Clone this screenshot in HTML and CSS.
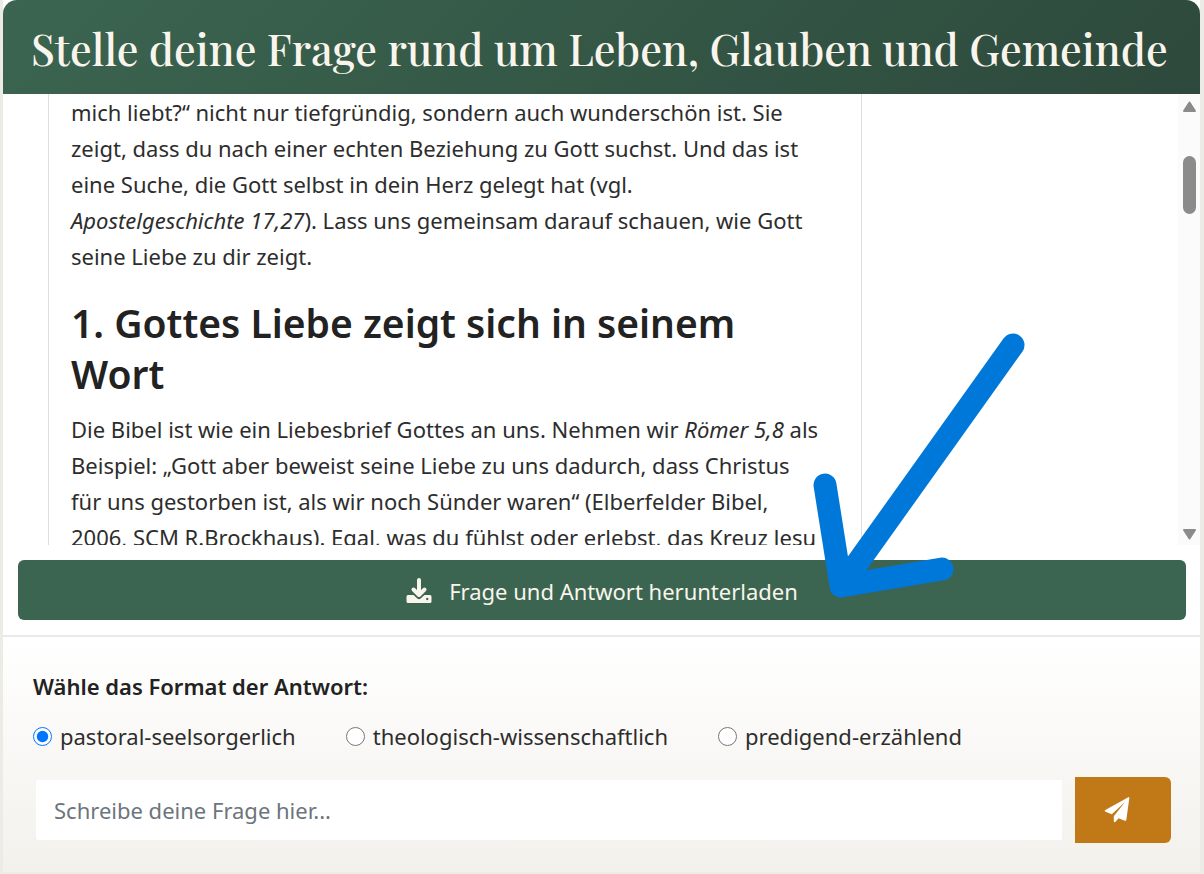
FILE: index.html
```html
<!DOCTYPE html>
<html lang="de">
<head>
<meta charset="utf-8">
<meta name="viewport" content="width=device-width, initial-scale=1">
<title>Stelle deine Frage</title>
<link rel="stylesheet" href="styles.css">
</head>
<body>
<main class="app">
  <header class="app-header">
    <h1 class="app-title">Stelle deine Frage rund um Leben, Glauben und Gemeinde</h1>
  </header>

  <section class="chat">
    <div class="chat-body">
      <article class="message">
        <p class="message-text">mich liebt?“ nicht nur tiefgründig, sondern auch wunderschön ist. Sie<br>
          zeigt, dass du nach einer echten Beziehung zu Gott suchst. Und das ist<br>
          eine Suche, die Gott selbst in dein Herz gelegt hat (vgl.<br>
          <em>Apostelgeschichte 17,27</em>). Lass uns gemeinsam darauf schauen, wie Gott<br>
          seine Liebe zu dir zeigt.</p>
        <h2 class="message-heading">1. Gottes Liebe zeigt sich in seinem<br>Wort</h2>
        <p class="message-text">Die Bibel ist wie ein Liebesbrief Gottes an uns. Nehmen wir <em>Römer 5,8</em> als<br>
          Beispiel: „Gott aber beweist seine Liebe zu uns dadurch, dass Christus<br>
          für uns gestorben ist, als wir noch Sünder waren“ (Elberfelder Bibel,<br>
          2006, SCM R.Brockhaus). Egal, was du fühlst oder erlebst, das Kreuz Jesu</p>
      </article>
    </div>
    <div class="scrollbar" aria-hidden="true">
      <svg class="scroll-arrow" viewBox="0 0 15 12"><path d="M7.500 1.500 13 10H2Z"/></svg>
      <div class="scroll-track"><div class="scroll-thumb"></div></div>
      <svg class="scroll-arrow" viewBox="0 0 15 12"><path d="M2 2H13L7.500 10.500Z"/></svg>
    </div>
  </section>

  <div class="download">
    <button class="download-button" type="button">
      <svg class="download-icon" viewBox="0 0 26 26" aria-hidden="true">
        <path class="icon-line" d="M13 2V16M7.500 11.500 13 17 18.500 11.500"/>
        <path class="icon-fill" fill-rule="evenodd" d="M2 17H7.500L11.300 20.500Q13 22 14.700 20.500L18.500 17H24Q25.500 17 25.500 18.500V23.500Q25.500 25 24 25H2Q.5 25 .5 23.500V18.500Q.5 17 2 17ZM21.200 19.800a1.200 1.200 0 1 0 .1 0Z"/>
      </svg>
      <span>Frage und Antwort herunterladen</span>
    </button>
  </div>

  <form class="ask">
    <fieldset class="formats">
      <legend class="formats-title">Wähle das Format der Antwort:</legend>
      <div class="formats-row">
        <label class="format"><input class="format-radio" type="radio" name="format" checked><span>pastoral-seelsorgerlich</span></label>
        <label class="format"><input class="format-radio" type="radio" name="format"><span>theologisch-wissenschaftlich</span></label>
        <label class="format"><input class="format-radio" type="radio" name="format"><span>predigend-erzählend</span></label>
      </div>
    </fieldset>
    <div class="question">
      <input class="question-input" type="text" aria-label="Deine Frage" placeholder="Schreibe deine Frage hier...">
      <button class="send-button" type="button" aria-label="Senden">
        <svg class="send-icon" viewBox="0 0 26 26" aria-hidden="true">
          <path d="M24.300.2Q25.500-.2 25.300 1.300L22.400 22.600Q22.200 24.200 20.800 23.700L14.500 21.200 11.800 24.600Q10 26.200 9.800 24V19.300L20.800 5.300 7.800 17.200 1.500 14.700Q0 13.800 1.300 12.900Z"/>
        </svg>
      </button>
    </div>
  </form>

  <svg class="pointer" viewBox="0 0 142 264" aria-hidden="true">
    <path d="M13 151 29 252 130 235M29 252 201 11"/>
  </svg>
</main>
</body>
</html>
```
FILE: styles.css
```css
* {
  box-sizing: border-box;
}

body {
  margin: 0;
  background: #ecebe6;
  color: #2d2d2d;
  font-family: "Noto Sans", sans-serif;
  font-size: 22px;
  line-height: 36px;
}

.app {
  position: relative;
  display: flex;
  flex-direction: column;
  height: calc(100vh - 2px);
  margin: 0 4px 2px 3px;
  background: #fff;
}

.app-header {
  padding: 16px 28px 14px;
  border-radius: 14px 14px 0 0;
  background: linear-gradient(135deg, #3b6551, #2d493b);
}

.app-title {
  margin: 0;
  color: #faf5ec;
  font-family: "Playfair Display", "Liberation Serif", serif;
  font-size: 43px;
  font-weight: 500;
  line-height: 64px;
  white-space: nowrap;
}

.chat {
  display: flex;
  flex: 1;
  min-height: 0;
  overflow: hidden;
}

.chat-body {
  flex: 1;
  padding: 0 45px;
  overflow: hidden;
}

.message {
  width: 75%;
  min-height: 100%;
  padding: 0 22px;
  border: solid #dedede;
  border-width: 0 1px;
  white-space: nowrap;
}

.message-text {
  margin: 0;
}

.message-heading {
  margin: 23px 0 12px;
  color: #222;
  font-size: 39px;
  font-weight: 600;
  line-height: 51px;
}

.scrollbar {
  display: flex;
  flex-direction: column;
  width: 22px;
  padding: 7px 3px 5px 4px;
  background: #fbfbfb;
}

.scroll-arrow {
  width: 15px;
  height: 12px;
  fill: #8b8b8b;
  stroke: #8b8b8b;
  stroke-width: 2;
  stroke-linejoin: round;
}

.scroll-track {
  flex: 1;
  padding: 43px 1px 0;
}

.scroll-thumb {
  height: 58px;
  border-radius: 7px;
  background: #8b8b8b;
}

.download {
  padding: 15px 14px 15px 15px;
}

.download-button {
  display: flex;
  align-items: center;
  justify-content: center;
  gap: 17px;
  width: 100%;
  height: 60px;
  padding: 2px 0 0;
  border: 0;
  border-radius: 6px;
  background: #3b6551;
  color: #faf5ec;
  font: inherit;
}

.download-icon {
  width: 26px;
  height: 26px;
}

.icon-line {
  fill: none;
  stroke: #faf5ec;
  stroke-width: 4;
  stroke-linecap: round;
  stroke-linejoin: round;
}

.icon-fill {
  fill: #faf5ec;
  stroke: #3b6551;
  stroke-width: 1;
  paint-order: stroke;
}

.ask {
  padding: 31px 29px 29px 30px;
  border-top: 2px solid #e9e9e9;
  background: linear-gradient(#fff, #f3f1ec);
}

.formats {
  margin: 0;
  padding: 0;
  border: 0;
}

.formats-title {
  padding: 0;
  color: #222;
  font-weight: 600;
}

.formats-row {
  display: flex;
  gap: 50px;
  padding: 14px 0 23px;
}

.format {
  display: flex;
  align-items: center;
  gap: 8px;
  white-space: nowrap;
}

.format-radio {
  width: 19px;
  height: 19px;
  margin: 0;
}

.question {
  display: flex;
  align-items: center;
  gap: 13px;
  padding-left: 3px;
}

.question-input {
  flex: 1;
  min-width: 0;
  height: 60px;
  padding: 0 18px;
  border: 0;
  border-radius: 3px 0 0 3px;
  background: #fff;
  color: #2d2d2d;
  font: inherit;
}

.question-input::placeholder {
  color: #6c757d;
}

.send-button {
  display: flex;
  align-items: center;
  justify-content: center;
  width: 96px;
  height: 66px;
  padding: 0 12px 0 0;
  border: 0;
  border-radius: 0 6px 6px 0;
  background: #c17817;
}

.send-icon {
  width: 26px;
  height: 26px;
  fill: #fff;
}

.pointer {
  position: absolute;
  top: 334px;
  left: 809px;
  width: 142px;
  height: 264px;
  overflow: visible;
  fill: none;
  stroke: #0078d9;
  stroke-width: 23;
  stroke-linecap: round;
  stroke-linejoin: round;
  pointer-events: none;
}
```
